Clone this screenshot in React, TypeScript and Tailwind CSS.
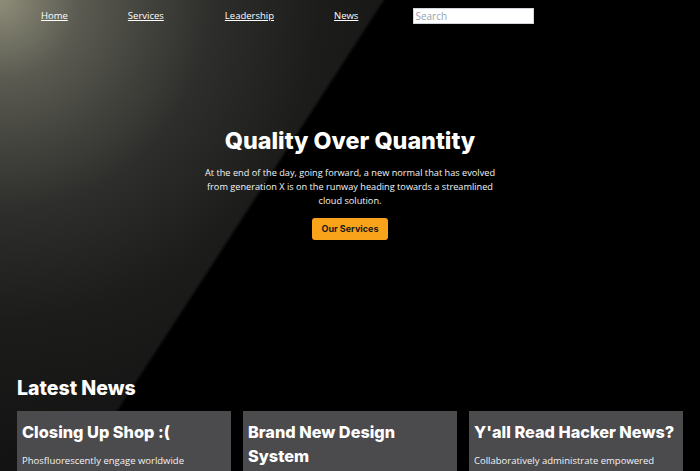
const links = ["Home", "Services", "Leadership", "News"];

const news = [
  {
    title: "Closing Up Shop :(",
    body: "Phosfluorescently engage worldwide methodologies with web-enabled technology. Interactively coordinate proactive e-commerce via process-centric thinking.",
  },
  {
    title: "Brand New Design System",
    body: "Completely synergize resource taxing relationships via premier niche markets. Professionally cultivate one-to-one customer service.",
  },
  {
    title: "Y'all Read Hacker News?",
    body: "Collaboratively administrate empowered markets via plug-and-play networks. Dynamically procrastinate B2C users after installed base benefits.",
  },
];

const heading = { fontFamily: "Inter, 'Open Sans', sans-serif" };

const App = () => {
  return (
    <div
      className="min-h-screen w-[700px] bg-black text-white font-['Open_Sans',sans-serif] bg-[linear-gradient(123deg,transparent_0px,transparent_320px,#000_324px),radial-gradient(circle_at_0_0,#8e8d79_0px,#5a5a51_80px,#2e2e2c_210px,#1c1c1b_320px,#131313_460px)]"
    >
      <nav className="flex items-center h-[32px] text-[9.5px]">
        <a href="#" className="underline ml-[41px]">
          {links[0]}
        </a>
        <a href="#" className="underline ml-[60px]">
          {links[1]}
        </a>
        <a href="#" className="underline ml-[61px]">
          {links[2]}
        </a>
        <a href="#" className="underline ml-[60px]">
          {links[3]}
        </a>
        <input
          placeholder="Search"
          className="ml-[55px] w-[121px] h-[16px] bg-white border border-gray-300 px-[1px] text-[10px] text-gray-800 placeholder:text-gray-400 outline-none"
        />
      </nav>

      <section className="flex flex-col items-center text-center pt-[95px] h-[343px]">
        <h1 style={heading} className="text-[23.3px] font-extrabold leading-[28px]">
          Quality Over Quantity
        </h1>
        <p className="mt-[11px] w-[296px] text-[9.2px] leading-[14px] text-gray-100">
          At the end of the day, going forward, a new normal that has evolved from generation X is
          on the runway heading towards a streamlined cloud solution.
        </p>
        <button
          style={heading}
          className="mt-[10px] w-[76px] h-[22px] rounded-[3px] bg-[#f9a31b] text-[9px] font-bold text-[#1a1a1a]"
        >
          Our Services
        </button>
      </section>

      <section className="px-[17px]">
        <h2 style={heading} className="text-[19.5px] font-extrabold leading-[26px] mb-[10px]">
          Latest News
        </h2>
        <div className="grid grid-cols-3 gap-[12px]">
          {news.map((n) => (
            <div key={n.title} className="bg-[#4b4a4d] px-[5px] pt-[9px] pb-4">
              <h3 style={heading} className="text-[16.3px] font-extrabold leading-[24px]">
                {n.title}
              </h3>
              <p className="mt-[10px] text-[9.5px] leading-[14px] text-gray-100">{n.body}</p>
            </div>
          ))}
        </div>
      </section>
    </div>
  );
};

export default App;
